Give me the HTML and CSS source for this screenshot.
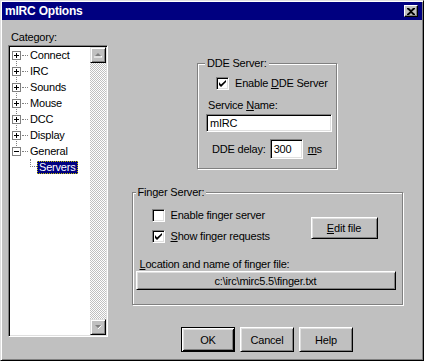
FILE: index.html
```html
<!DOCTYPE html>
<html lang="en">
<head>
    <meta charset="UTF-8">
    <meta name="viewport" content="width=device-width, initial-scale=1.0">
    <title>mIRC Options</title>
    <link rel="stylesheet" href="styles.css">
</head>
<body>
    <div class="window">
        <div class="titlebar">
            <span class="title">mIRC Options</span>
            <span class="close">
                <svg width="8" height="7" viewBox="0 0 8 7">
                    <path d="M0 0h2l2 2 2-2h2v1L5 3.5 8 6v1H6L4 5 2 7H0V6l3-2.5L0 1z" fill="#000"/>
                </svg>
            </span>
        </div>

        <div class="client">
            <div class="left">
                <div class="cat-label">Category:</div>
                <div class="tree">
                    <ul class="nodes">
                        <li class="node"><span class="exp plus"></span><span class="dots"></span><span class="label">Connect</span></li>
                        <li class="node"><span class="exp plus"></span><span class="dots"></span><span class="label">IRC</span></li>
                        <li class="node"><span class="exp plus"></span><span class="dots"></span><span class="label">Sounds</span></li>
                        <li class="node"><span class="exp plus"></span><span class="dots"></span><span class="label">Mouse</span></li>
                        <li class="node"><span class="exp plus"></span><span class="dots"></span><span class="label">DCC</span></li>
                        <li class="node"><span class="exp plus"></span><span class="dots"></span><span class="label">Display</span></li>
                        <li class="node"><span class="exp"></span><span class="dots"></span><span class="label">General</span></li>
                        <li class="node child"><span class="elbow"></span><span class="label selected">Servers</span></li>
                    </ul>
                    <div class="scrollbar">
                        <span class="sb-btn">
                            <svg width="8" height="5" viewBox="0 0 8 5"><path d="M4 0L7 3H1z" fill="#808080"/><path d="M7 3l1 1H0" stroke="#fff" fill="none"/></svg>
                        </span>
                        <span class="track"></span>
                        <span class="sb-btn">
                            <svg width="8" height="5" viewBox="0 0 8 5"><path d="M1 0h6L4 3z" fill="#808080"/><path d="M4 4l3.5-3.5" stroke="#fff" fill="none"/></svg>
                        </span>
                    </div>
                </div>
            </div>

            <div class="right">
                <fieldset class="group dde">
                    <legend>DDE Server:</legend>
                    <label class="check">
                        <span class="box checked"><svg width="7" height="7" viewBox="0 0 7 7"><path d="M0 2v3l2 2 5-5V0L2 4.5z" fill="#000"/></svg></span>
                        <span>Enable <u>D</u>DE Server</span>
                    </label>
                    <div class="field-label">Service <u>N</u>ame:</div>
                    <div class="edit service">mIRC</div>
                    <div class="delay-row">
                        <span>DDE delay:</span>
                        <span class="edit delay">300</span>
                        <span><u>m</u>s</span>
                    </div>
                </fieldset>

                <fieldset class="group finger">
                    <legend>Finger Server:</legend>
                    <div class="finger-top">
                        <div class="checks">
                            <label class="check">
                                <span class="box"></span>
                                <span>Enable finger server</span>
                            </label>
                            <label class="check">
                                <span class="box checked"><svg width="7" height="7" viewBox="0 0 7 7"><path d="M0 2v3l2 2 5-5V0L2 4.5z" fill="#000"/></svg></span>
                                <span><u>S</u>how finger requests</span>
                            </label>
                        </div>
                        <button class="btn edit-file"><u>E</u>dit file</button>
                    </div>
                    <div class="field-label loc"><u>L</u>ocation and name of finger file:</div>
                    <button class="btn path">c:\irc\mirc5.5\finger.txt</button>
                </fieldset>

                <div class="actions">
                    <button class="btn default">OK</button>
                    <button class="btn">Cancel</button>
                    <button class="btn">Help</button>
                </div>
            </div>
        </div>
    </div>
</body>
</html>
```

FILE: styles.css
```css
html, body {
    margin: 0;
    padding: 0;
}
body {
    font-family: "Liberation Sans", Arial, sans-serif;
    font-size: 11px;
    letter-spacing: -0.2px;
    color: #000;
    background-color: #c0c0c0;
}
.window {
    width: 424px;
    height: 361px;
    box-sizing: border-box;
    border: 1px solid;
    border-color: #dfdfdf #000 #000 #dfdfdf;
    box-shadow: inset 1px 1px #fff, inset -1px -1px #808080;
    padding: 1px;
    background-color: #c0c0c0;
}
.titlebar {
    height: 18px;
    background-color: #000080;
    color: #fff;
    display: flex;
    align-items: center;
    padding: 0 4px 0 3px;
}
.title {
    font-size: 12px;
    font-weight: bold;
    flex: 1;
}
.close {
    width: 14px;
    height: 12px;
    box-sizing: border-box;
    display: flex;
    align-items: center;
    justify-content: center;
    background-color: #c0c0c0;
    border: 1px solid;
    border-color: #fff #000 #000 #fff;
    box-shadow: inset -1px -1px #808080;
}

.client {
    display: flex;
    padding: 11px 0 0 6px;
}
.left {
    width: 100px;
}
.cat-label {
    line-height: 13px;
    padding-left: 3px;
    margin-bottom: 1px;
}
.tree {
    height: 292px;
    box-sizing: border-box;
    border: 1px solid;
    border-color: #808080 #fff #fff #808080;
    box-shadow: inset 1px 1px #000, inset -1px -1px #dfdfdf;
    padding: 1px;
    background-color: #fff;
    display: flex;
}
.nodes {
    list-style: none;
    margin: 0;
    padding: 0 0 0 2px;
    flex: 1;
    background: repeating-linear-gradient(to bottom, #808080 0 1px, transparent 1px 2px) 6px 8px / 1px 96px no-repeat;
}
.node {
    height: 16px;
    display: flex;
    align-items: center;
}
.exp {
    width: 9px;
    height: 9px;
    box-sizing: border-box;
    border: 1px solid #808080;
    background:
        linear-gradient(#000, #000) center / 5px 1px no-repeat,
        #fff;
}
.exp.plus {
    background:
        linear-gradient(#000, #000) center / 5px 1px no-repeat,
        linear-gradient(#000, #000) center / 1px 5px no-repeat,
        #fff;
}
.dots {
    width: 6px;
    height: 0;
    margin: 0 1px;
    border-top: 1px dotted #808080;
}
.label {
    padding: 0 1px;
    line-height: 13px;
}
.node.child {
    padding-left: 18px;
}
.elbow {
    width: 6px;
    height: 7px;
    margin: 0 0 8px 0;
    border-left: 1px dotted #808080;
    border-bottom: 1px dotted #808080;
}
.label.selected {
    background-color: #000080;
    color: #fff;
    outline: 1px dotted #c0c000;
    outline-offset: -1px;
    padding: 0 2px;
}

.scrollbar {
    width: 16px;
    display: flex;
    flex-direction: column;
}
.sb-btn {
    height: 16px;
    box-sizing: border-box;
    display: flex;
    align-items: center;
    justify-content: center;
    background-color: #c0c0c0;
    border: 1px solid;
    border-color: #dfdfdf #000 #000 #dfdfdf;
    box-shadow: inset 1px 1px #fff, inset -1px -1px #808080;
}
.track {
    flex: 1;
    background: repeating-conic-gradient(#c0c0c0 0 25%, #fff 0 50%) 0 0 / 2px 2px;
}

.right {
    flex: 1;
    display: flex;
    flex-direction: column;
    align-items: center;
    padding-left: 4px;
}
.group {
    margin: 0;
    padding: 0;
    min-inline-size: 0;
    border: 1px solid #808080;
    box-shadow: 1px 1px #fff, inset 1px 1px #fff;
}
.group legend {
    padding: 0 2px;
    line-height: 13px;
    background-color: #c0c0c0;
}
.dde {
    width: 140px;
    box-sizing: border-box;
    margin-top: 26px;
    padding-bottom: 9px;
}
.dde legend {
    margin-left: 7px;
}
.check {
    display: flex;
    align-items: center;
    gap: 6px;
    line-height: 13px;
}
.box {
    width: 13px;
    height: 13px;
    box-sizing: border-box;
    border: 1px solid;
    border-color: #808080 #fff #fff #808080;
    box-shadow: inset 1px 1px #000, inset -1px -1px #dfdfdf;
    background-color: #fff;
    display: flex;
    align-items: center;
    justify-content: center;
}
.dde .check {
    margin: 7px 0 0 18px;
}
.field-label {
    line-height: 13px;
}
.dde .field-label {
    margin: 9px 0 0 10px;
}
.edit {
    display: flex;
    align-items: center;
    box-sizing: border-box;
    border: 1px solid;
    border-color: #808080 #fff #fff #808080;
    box-shadow: inset 1px 1px #000, inset -1px -1px #dfdfdf;
    background-color: #fff;
    padding: 0 3px;
}
.service {
    width: 126px;
    height: 18px;
    margin: 2px 0 0 8px;
}
.delay-row {
    display: flex;
    align-items: center;
    margin: 7px 0 0 14px;
}
.delay {
    width: 33px;
    height: 20px;
    margin: 0 5px 0 4px;
}

.finger {
    width: 271px;
    box-sizing: border-box;
    margin-top: 17px;
    padding-bottom: 14px;
}
.finger legend {
    margin-left: 3px;
}
.finger-top {
    display: flex;
    align-items: flex-start;
}
.checks {
    display: flex;
    flex-direction: column;
    gap: 8px;
    margin: 10px 0 0 19px;
}
.btn {
    font-family: inherit;
    font-size: 11px;
    letter-spacing: -0.2px;
    color: #000;
    background-color: #c0c0c0;
    box-sizing: border-box;
    padding: 0;
    border: 1px solid;
    border-color: #fff #000 #000 #fff;
    box-shadow: inset 1px 1px #dfdfdf, inset -1px -1px #808080;
    cursor: pointer;
}
.edit-file {
    width: 67px;
    height: 22px;
    margin: 18px 24px 0 auto;
}
.loc {
    margin: 15px 0 0 7px;
}
.path {
    width: 260px;
    height: 19px;
    margin-left: 3px;
}

.actions {
    display: flex;
    gap: 5px;
    margin-top: 22px;
}
.actions .btn {
    width: 54px;
    height: 25px;
}
.btn.default {
    border: 1px solid #000;
    box-shadow: inset 1px 1px #fff, inset -1px -1px #000, inset 2px 2px #dfdfdf, inset -2px -2px #808080;
}
```
